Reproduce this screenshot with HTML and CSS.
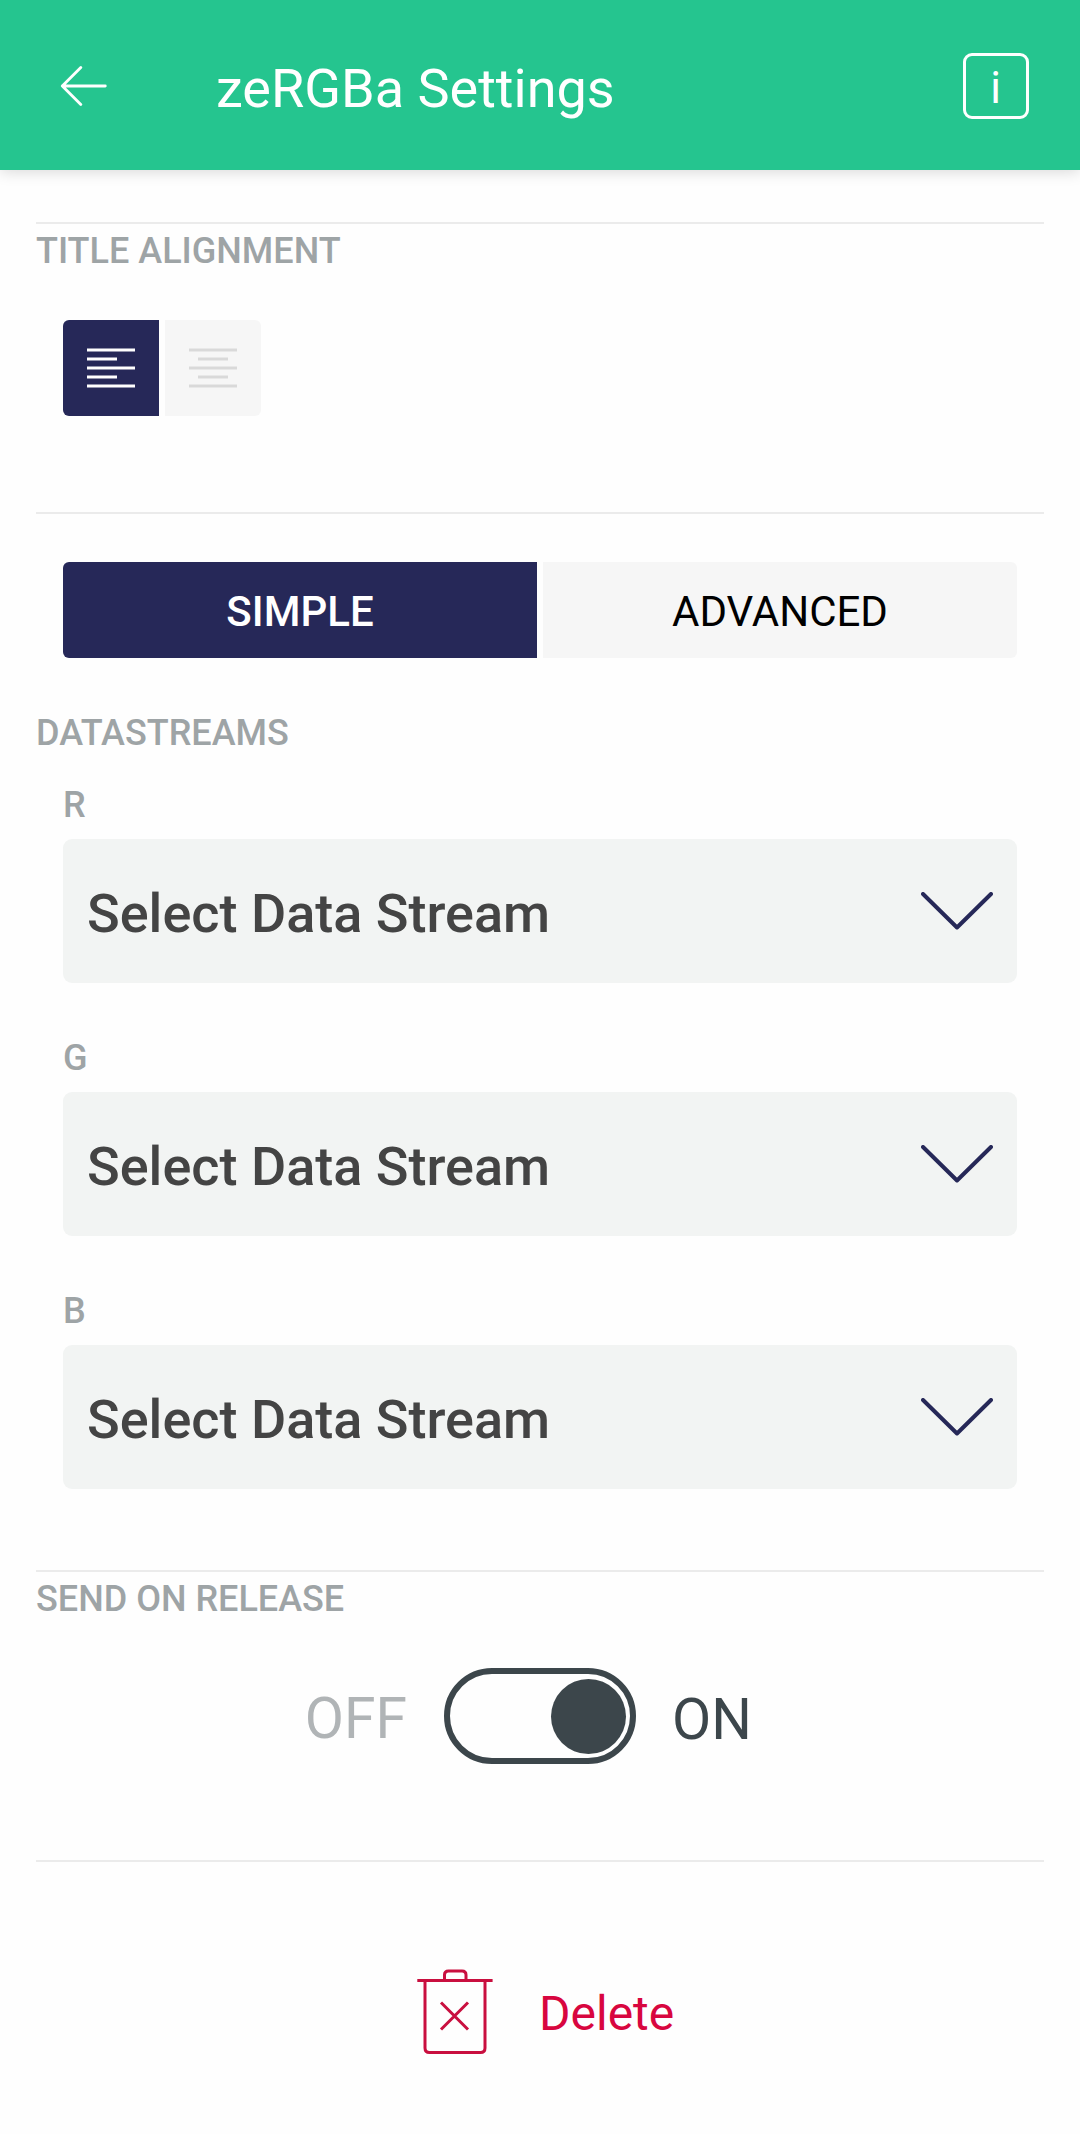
FILE: index.html
```html
<!DOCTYPE html>
<html lang="en">
<head>
<meta charset="utf-8">
<title>zeRGBa Settings</title>
<link rel="stylesheet" href="styles.css">
</head>
<body>
<header class="topbar">
  <svg class="back" width="48" height="40" viewBox="0 0 48 40"><path d="M45.300 20H2.300M20.800 1.500L2.300 20L20.800 38.500"/></svg>
  <h1 class="title">zeRGBa Settings</h1>
  <div class="info">i</div>
</header>
<main class="content">
  <section class="section alignment">
    <h2 class="caption">TITLE ALIGNMENT</h2>
    <div class="align-group">
      <button class="align-btn active" aria-label="Left">
        <svg width="48" height="40" viewBox="0 0 48 40"><path d="M0 2H48M0 11H30M0 20H48M0 29H30M0 38H48"/></svg>
      </button>
      <button class="align-btn" aria-label="Center">
        <svg width="48" height="40" viewBox="0 0 48 40"><path d="M0 2H48M9 11H39M0 20H48M9 29H39M0 38H48"/></svg>
      </button>
    </div>
  </section>
  <section class="section streams">
    <div class="tabs">
      <button class="tab active">SIMPLE</button>
      <button class="tab">ADVANCED</button>
    </div>
    <h2 class="caption">DATASTREAMS</h2>
    <div class="field">
      <span class="caption">R</span>
      <div class="select"><span>Select Data Stream</span><svg class="chevron" width="72" height="38" viewBox="0 0 72 38"><path d="M2 2L36 35.500L70 2"/></svg></div>
    </div>
    <div class="field">
      <span class="caption">G</span>
      <div class="select"><span>Select Data Stream</span><svg class="chevron" width="72" height="38" viewBox="0 0 72 38"><path d="M2 2L36 35.500L70 2"/></svg></div>
    </div>
    <div class="field">
      <span class="caption">B</span>
      <div class="select"><span>Select Data Stream</span><svg class="chevron" width="72" height="38" viewBox="0 0 72 38"><path d="M2 2L36 35.500L70 2"/></svg></div>
    </div>
  </section>
  <section class="section release">
    <h2 class="caption">SEND ON RELEASE</h2>
    <div class="switch-row">
      <span class="off">OFF</span>
      <div class="switch"><div class="knob"></div></div>
      <span class="on">ON</span>
    </div>
  </section>
  <section class="section remove">
    <button class="delete">
      <svg width="76" height="86" viewBox="0 0 76 86"><path d="M0.300 11.500H75.600M27.500 11V6Q27.500 2 31.500 2H45Q49 2 49 6V11M8 12V79Q8 83.500 12.500 83.500H63.500Q68 83.500 68 79V12M24 33.500L51 60.500M51 33.500L24 60.500"/></svg>
      <span>Delete</span>
    </button>
  </section>
</main>
</body>
</html>
```
FILE: styles.css
```css
* {
  box-sizing: border-box;
}

body {
  margin: 0;
  background: #fefefe;
  font-family: Roboto, sans-serif;
}

button {
  margin: 0;
  padding: 0;
  border: 0;
  background: none;
  font: inherit;
  color: inherit;
}

svg {
  display: block;
  flex: none;
  fill: none;
}

.topbar {
  display: flex;
  height: 170px;
  padding: 0 51px 0 60px;
  background: #25c58f;
  color: #fff;
  box-shadow: 0 2px 14px rgba(0, 0, 0, 0.15);
}

.back {
  margin-top: 66px;
  stroke: #fff;
  stroke-width: 2.8;
  stroke-linecap: round;
  stroke-linejoin: round;
}

.title {
  flex: 1;
  margin: 57px 0 0 108px;
  font-size: 54px;
  font-weight: 400;
  line-height: 63px;
}

.info {
  width: 66px;
  height: 66px;
  margin-top: 53px;
  padding: 6px 1px 0 0;
  border: 3px solid #fff;
  border-radius: 9px;
  font-size: 44px;
  line-height: 52px;
  text-align: center;
}

.content {
  padding: 52px 36px 0;
}

.section {
  border-top: 2px solid #ebebeb;
}

.caption {
  display: block;
  margin: 0;
  color: #9ea4a6;
  font-size: 36px;
  font-weight: 500;
  line-height: 42px;
}

.alignment {
  height: 290px;
  padding-top: 6px;
}

.align-group {
  display: flex;
  gap: 6px;
  margin: 48px 27px 0;
}

.align-btn {
  display: grid;
  place-items: center;
  width: 96px;
  height: 96px;
  border-radius: 0 6px 6px 0;
  background: #f6f6f6;
  stroke: #d9d9d9;
  stroke-width: 3;
}

.align-btn.active {
  border-radius: 6px 0 0 6px;
  background: #262858;
  stroke: #fff;
}

.streams {
  height: 1058px;
  padding-top: 48px;
}

.tabs {
  display: flex;
  gap: 6px;
  margin: 0 27px 54px;
}

.tab {
  flex: 1;
  height: 96px;
  padding-top: 3px;
  border-radius: 0 6px 6px 0;
  background: #f6f6f6;
  color: #000;
  font-size: 42px;
  line-height: 49px;
}

.tab.active {
  border-radius: 6px 0 0 6px;
  background: #262858;
  color: #fff;
  font-weight: 500;
}

.field {
  margin: 30px 27px 54px;
}

.field + .field {
  margin-top: 0;
}

.field .caption {
  margin-bottom: 13px;
}

.select {
  display: flex;
  justify-content: space-between;
  height: 144px;
  padding: 43px 24px 0;
  border-radius: 9px;
  background: #f2f4f3;
  color: #444;
  font-size: 54px;
  font-weight: 500;
  line-height: 63px;
}

.chevron {
  margin-top: 10px;
  stroke: #262858;
  stroke-width: 4;
  stroke-linecap: round;
  stroke-linejoin: round;
}

.release {
  height: 290px;
  padding-top: 6px;
}

.switch-row {
  display: grid;
  grid-template-columns: 1fr 192px 1fr;
  column-gap: 36px;
  margin-top: 48px;
  font-size: 57px;
  line-height: 67px;
}

.off {
  padding: 17px 1px 0 0;
  color: #b0b4b6;
  text-align: right;
}

.on {
  padding-top: 18px;
  color: #3c464b;
}

.switch {
  display: flex;
  align-items: center;
  justify-content: flex-end;
  height: 96px;
  padding-right: 4px;
  border: 6px solid #3c464b;
  border-radius: 48px;
}

.knob {
  width: 75px;
  height: 75px;
  border-radius: 50%;
  background: #3c464b;
}

.remove {
  padding-top: 107px;
}

.delete {
  display: flex;
  margin-left: 381px;
  gap: 46px;
  color: #d8063f;
  stroke: #c90f3f;
  stroke-width: 3;
  font-size: 48px;
  line-height: 57px;
}

.delete span {
  padding-top: 16px;
  stroke: none;
}
```
